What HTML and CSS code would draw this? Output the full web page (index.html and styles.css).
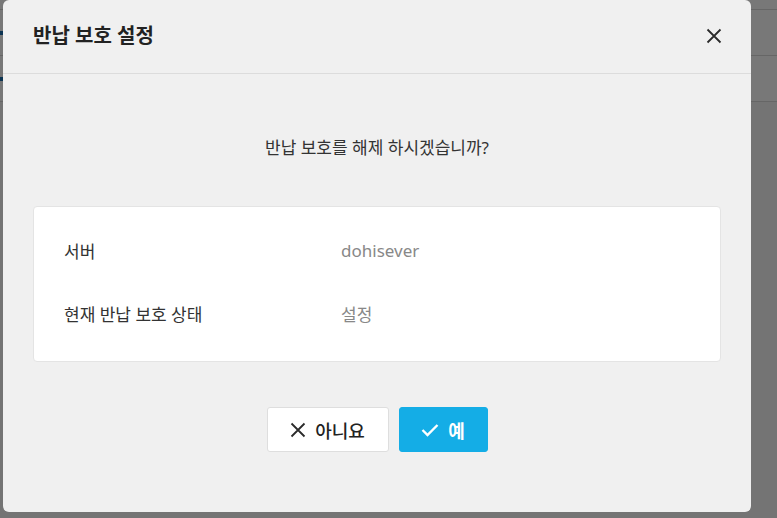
FILE: index.html
```html
<!DOCTYPE html>
<html lang="ko">
<head>
<meta charset="utf-8">
<link rel="stylesheet" href="styles.css">
</head>
<body>
<div class="page">
  <div class="page-line line-a"></div>
  <div class="page-row">
    <span class="mark"></span>
  </div>
  <div class="page-line line-b"></div>
  <div class="page-row">
    <span class="mark"></span>
  </div>
  <div class="page-line line-c"></div>
  <div class="page-rest"></div>
</div>
<div class="overlay"></div>
<div class="modal">
  <div class="modal-header">
    <h2 class="modal-title">반납 보호 설정</h2>
    <button class="close-btn" aria-label="닫기">
      <svg width="16" height="16" viewBox="0 0 16 16"><path d="M1.5 1.5L14.5 14.5M14.5 1.5L1.5 14.5" stroke="#2b2b2b" stroke-width="1.8" fill="none"/></svg>
    </button>
  </div>
  <div class="modal-body">
    <p class="message">반납 보호를 해제 하시겠습니까?</p>
    <div class="info-card">
      <div class="info-row">
        <span class="info-label">서버</span>
        <span class="info-value">dohisever</span>
      </div>
      <div class="info-row">
        <span class="info-label">현재 반납 보호 상태</span>
        <span class="info-value">설정</span>
      </div>
    </div>
    <div class="actions">
      <button class="btn btn-cancel">
        <svg width="16" height="16" viewBox="0 0 16 16"><path d="M1.5 1.5L14.5 14.5M14.5 1.5L1.5 14.5" stroke="#2b2b2b" stroke-width="1.8" fill="none"/></svg>
        <span>아니요</span>
      </button>
      <button class="btn btn-ok">
        <svg width="18" height="14" viewBox="0 0 18 14"><path d="M1.5 7L6.5 12L16.5 2" stroke="#fff" stroke-width="2.4" fill="none"/></svg>
        <span>예</span>
      </button>
    </div>
  </div>
</div>
</body>
</html>
```

FILE: styles.css
```css
* { box-sizing: border-box; }
html, body {
  margin: 0;
  padding: 0;
  width: 777px;
  height: 518px;
  overflow: hidden;
}
body {
  font-family: "Noto Sans", "Noto Sans CJK KR", sans-serif;
  background: #fff;
  position: relative;
}
.page {
  display: flex;
  flex-direction: column;
  height: 100%;
}
.page-line { height: 1px; background: #d8d8d8; flex: none; }
.line-a { margin-top: 9px; }
.page-row {
  height: 45px;
  flex: none;
  display: flex;
  align-items: center;
}
.mark {
  width: 3px;
  height: 4px;
  background: #1a6fae;
}
.page-rest { flex: 1; background: #f6f6f6; }
.overlay {
  position: absolute;
  inset: 0;
  background: rgba(0,0,0,0.53);
}
.modal {
  position: absolute;
  left: 3px;
  top: 0;
  width: 748px;
  height: 512px;
  background: #f0f0f0;
  border-radius: 6px;
  display: flex;
  flex-direction: column;
}
.modal-header {
  height: 74px;
  flex: none;
  border-bottom: 1px solid #dcdcdc;
  display: flex;
  align-items: center;
  justify-content: space-between;
  padding: 0 29px 0 30px;
}
.modal-title {
  margin: 0;
  font-size: 20px;
  font-weight: 700;
  color: #222;
  line-height: 1;
  padding-bottom: 2px;
}
.close-btn {
  border: 0;
  background: none;
  padding: 0;
  width: 16px;
  height: 16px;
  display: flex;
  margin-bottom: 1px;
}
.modal-body {
  padding: 0 30px;
  display: flex;
  flex-direction: column;
}
.message {
  margin: 0;
  height: 132px;
  display: flex;
  align-items: center;
  justify-content: center;
  font-size: 17px;
  color: #333;
  padding-top: 12px;
}
.info-card {
  background: #fff;
  border: 1px solid #e4e4e4;
  border-radius: 4px;
  padding: 12px 30px 16px;
}
.info-row {
  height: 63px;
  display: grid;
  grid-template-columns: 277px 1fr;
  align-items: center;
  font-size: 17px;
}
.info-label { color: #333; }
.info-value { color: #888; }
.actions {
  display: flex;
  justify-content: center;
  gap: 10px;
  margin-top: 45px;
}
.btn {
  height: 45px;
  border-radius: 3px;
  font-family: "Noto Sans", "Noto Sans CJK KR", sans-serif;
  font-size: 18px;
  display: flex;
  align-items: center;
  justify-content: center;
  gap: 9px;
  padding: 0;
  cursor: pointer;
}
.btn-cancel {
  width: 122px;
  background: #fff;
  border: 1px solid #dedede;
  color: #222;
  font-weight: 500;
}
.btn-ok {
  width: 89px;
  background: #14ade6;
  border: 1px solid #14ade6;
  color: #fff;
  font-weight: 700;
}
```
